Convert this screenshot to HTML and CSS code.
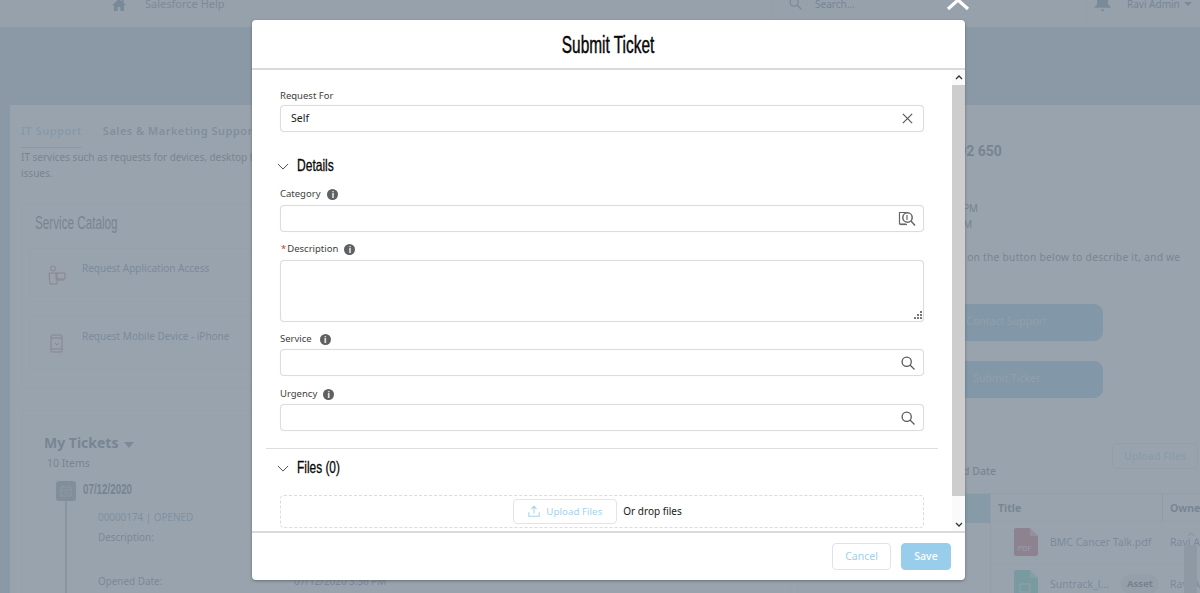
FILE: index.html
```html
<!DOCTYPE html>
<html lang="en">
<head>
<meta charset="utf-8">
<title>Submit Ticket</title>
<link rel="stylesheet" href="styles.css">
</head>
<body>
<div class="page">
  <header class="topbar">
    <div class="nav-left">
      <svg class="home-icon" viewBox="0 0 14 12"><path d="M7 0 0 6.200h2V12h3.600V8h2.800v4H12V6.200h2L11.600 4V1H10v1.600z"/></svg>
      <span class="nav-title">Salesforce Help</span>
    </div>
    <div class="nav-search">
      <svg class="search-icon" viewBox="0 0 14 14"><circle cx="5.500" cy="5.500" r="4.300"/><path d="m8.700 8.700 4.500 4.500"/></svg>
      <span>Search...</span>
    </div>
    <div class="nav-user">
      <svg class="bell-icon" viewBox="0 0 16 16"><path d="M8 0c3 0 4.600 2 4.600 5v3.500L15 11.500H1l2.400-3V5C3.400 2 5 0 8 0zM6.500 13h3a1.500 1.500 0 0 1-3 0z"/></svg>
      <span>Ravi Admin</span><i class="caret"></i>
    </div>
  </header>
  <div class="hero"></div>
  <main class="panel">
    <section class="col-left">
      <nav class="tabs">
        <span class="tab tab-active">IT Support</span>
        <span class="tab">Sales &amp; Marketing Support</span>
      </nav>
      <p class="tab-desc">IT services such as requests for devices, desktop hardware, software and other<br>issues.</p>
      <div class="card catalog">
        <h2 class="card-title"><span class="narrow n65">Service Catalog</span></h2>
        <div class="cat-item">
          <svg class="cat-icon" viewBox="0 0 20 20"><circle cx="6" cy="3.500" r="2.500"/><path d="M2 8h8v11H3zM9 8h9v6H9zM10 15h7"/></svg>
          <span class="cat-link">Request Application Access</span>
        </div>
        <div class="cat-item">
          <svg class="cat-icon" viewBox="0 0 20 20"><rect x="4" y="2" width="11" height="17" rx="1"/><path d="M4 5h11M4 16h11M8 10l2 2 1.500-2"/></svg>
          <span class="cat-link">Request Mobile Device - iPhone</span>
        </div>
      </div>
      <div class="card tickets">
        <div class="tickets-title">My Tickets <i class="caret caret-lg"></i></div>
        <div class="tickets-count">10 Items</div>
        <div class="day">
          <span class="day-icon"><svg viewBox="0 0 14 14"><path d="M2 3h10v9H2zM2 6h10M4 1v2M10 1v2M5 9h4"/></svg></span>
          <span class="day-date"><span class="narrow n70">07/12/2020</span></span>
        </div>
        <div class="entry">
          <a class="entry-link">00000174 | OPENED</a>
          <div class="entry-row">Description:</div>
          <div class="entry-row entry-opened"><span class="entry-key">Opened Date:</span><span>07/12/2020 3:36 PM</span></div>
        </div>
      </div>
    </section>
    <section class="col-right">
      <div class="phone">Customer Care: 1800 102 650</div>
      <div class="hours">Monday - Friday: 9:00 AM - 6:00 PM<br>Saturday-Sun: 10:00 AM - 1:00 PM</div>
      <p class="help-text">If you have an issue, please click on the button below to describe it, and we</p>
      <div class="cta">Contact Support</div>
      <div class="cta cta-second">Submit Ticket</div>
      <div class="files-head">
        <span class="sort-note">Sorted by Uploaded Date</span>
        <span class="upload-bg">Upload Files</span>
      </div>
      <div class="table">
        <div class="t-side"></div>
        <div class="t-main">
          <div class="t-row t-head"><span class="t-title">Title</span><span class="t-owner">Owner</span></div>
          <div class="t-row">
            <span class="t-title t-file"><svg class="file-icon" viewBox="0 0 24 28"><path class="fill-pdf" d="M2 0h14l8 8v18a2 2 0 0 1-2 2H2a2 2 0 0 1-2-2V2a2 2 0 0 1 2-2z"/><path class="fold" d="M16 0v8h8z"/><text class="pdf-label" x="3.500" y="23">PDF</text></svg><span class="file-name">BMC Cancer Talk.pdf</span></span>
            <span class="t-owner owner-cell">Ravi Admin</span>
          </div>
          <div class="t-row">
            <span class="t-title t-file"><svg class="file-icon" viewBox="0 0 24 28"><path class="fill-asset" d="M2 0h14l8 8v18a2 2 0 0 1-2 2H2a2 2 0 0 1-2-2V2a2 2 0 0 1 2-2z"/><path class="fold" d="M16 0v8h8z"/><rect class="asset-mark" x="6" y="14" width="10" height="8"/></svg><span class="file-name">Suntrack_l...</span><span class="pill">Asset</span></span>
            <span class="t-owner owner-cell">Ravi Admin</span>
          </div>
        </div>
        <div class="t-scroll"><svg viewBox="0 0 8 5"><path d="m1 4 3-3 3 3"/></svg><div class="t-thumb"></div></div>
      </div>
    </section>
  </main>
</div>

<div class="backdrop"></div>

<div class="modal" role="dialog">
  <svg class="modal-close" viewBox="0 0 24 24"><path d="M2 15 12 6 22 15"/></svg>
  <header class="modal-head"><h1><span class="narrow n67 center">Submit Ticket</span></h1></header>
  <div class="modal-body">
    <div class="form">
      <label class="lbl lbl-first">Request For</label>
      <div class="input"><span class="val">Self</span>
        <svg class="ico ico-x" viewBox="0 0 14 14"><path d="m2 2 10 10M12 2 2 12"/></svg>
      </div>

      <div class="sec sec-details"><svg class="chev" viewBox="0 0 14 8"><path d="m1 1 6 6 6-6"/></svg><span class="narrow n73">Details</span></div>

      <label class="lbl lbl-cat">Category <i class="info info-cat">i</i></label>
      <div class="input">
        <svg class="ico ico-lookup" viewBox="0 0 18 16"><path class="thin" d="M8 13H1.500V1.500h7.500"/><path class="thin" d="M2 13.500h7"/><circle cx="9.500" cy="6.500" r="4.700"/><path d="m13 10 4 4.500"/><path class="thin" d="M9 4v5"/></svg>
      </div>

      <label class="lbl lbl-desc"><b class="req">*</b>Description <i class="info info-desc">i</i></label>
      <div class="input textarea">
        <svg class="grip" viewBox="0 0 8 8"><path d="M6 0h2v2H6zM3 3h2v2H3zM6 3h2v2H6zM0 6h2v2H0zM3 6h2v2H3zM6 6h2v2H6z"/></svg>
      </div>

      <label class="lbl lbl-service">Service <i class="info info-wide">i</i></label>
      <div class="input">
        <svg class="ico" viewBox="0 0 14 14"><circle cx="5.700" cy="5.700" r="4.600"/><path d="m9 9 4.500 4.500"/></svg>
      </div>

      <label class="lbl lbl-urgency">Urgency <i class="info">i</i></label>
      <div class="input">
        <svg class="ico" viewBox="0 0 14 14"><circle cx="5.700" cy="5.700" r="4.600"/><path d="m9 9 4.500 4.500"/></svg>
      </div>

      <hr class="rule">

      <div class="sec sec-files"><svg class="chev" viewBox="0 0 14 8"><path d="m1 1 6 6 6-6"/></svg><span class="narrow n72">Files (0)</span></div>

      <div class="drop">
        <span class="upload">
          <svg class="upload-ico" viewBox="0 0 14 14"><path d="M1 8.500V13h12V8.500M7 10V2M4 4.500 7 1.500l3 3"/></svg>
          Upload Files
        </span>
        <span class="drop-text">Or drop files</span>
      </div>
    </div>
    <div class="scrollbar">
      <div class="sb-btn"><svg viewBox="0 0 8 5"><path d="m1 4 3-3 3 3"/></svg></div>
      <div class="sb-thumb"></div>
      <div class="sb-rest"><svg viewBox="0 0 8 5"><path d="m1 1 3 3 3-3"/></svg></div>
    </div>
  </div>
  <footer class="modal-foot">
    <button class="btn btn-cancel">Cancel</button>
    <button class="btn btn-save">Save</button>
  </footer>
</div>
</body>
</html>
```
FILE: styles.css
```css
* { box-sizing: border-box; }
html, body { margin: 0; padding: 0; height: 593px; overflow: hidden; }
body { font-family: "Noto Sans", "Open Sans", sans-serif; color: #3e3e3c; position: relative; }

/* condensed display face, approximated by squeezing Liberation Sans */
.narrow { display: inline-block; white-space: nowrap; transform-origin: left center; }
.narrow.center { transform-origin: center center; }
.n65 { transform: scaleX(.65); }
.n67 { transform: scaleX(.67); }
.n70 { transform: scaleX(.7); }
.n72 { transform: scaleX(.72); }
.n73 { transform: scaleX(.73); }

/* page behind the dialog */
.page { width: 1200px; height: 593px; background: #bccde0; overflow: hidden; }
.topbar { height: 27px; background: #f3f3f3; display: flex; color: #54698d; font-size: 10px; line-height: 8px; }
.nav-left { display: flex; gap: 19px; padding-left: 112px; width: 771px; }
.home-icon { width: 14px; height: 12px; fill: #6b7c93; margin-top: -1px; }
.nav-title { font-size: 11px; color: #6f8096; }
.nav-search { display: flex; gap: 13px; width: 315px; border-left: 1px solid #eaeaea; padding-left: 17px; }
.search-icon { width: 13px; height: 13px; fill: none; stroke: #6f8096; stroke-width: 1.400; margin-top: -3px; }
.nav-user { display: flex; flex: 1; gap: 15px; padding-left: 6px; border-left: 1px solid #eaeaea; }
.bell-icon { width: 19px; height: 19px; fill: #6f8096; margin-top: -6px; }
.caret { display: inline-block; width: 0; height: 0; border: 4px solid transparent; border-top: 4px solid #6f8096; border-bottom: 0; margin: 2px 0 0 -11px; }
.hero { height: 78px; }

.panel { margin-left: 10px; height: 488px; background: #fff; display: flex; overflow: hidden; }
.col-left { width: 788px; flex: none; padding-left: 11px; border-right: 1px solid #f0f0f0; }
.tabs { display: flex; gap: 21px; height: 43px; padding-top: 18px; font-size: 11px; line-height: 16px; letter-spacing: .48px; font-weight: 600; color: #8a94a0; }
.tab-active { color: #a8cfe9; border-bottom: 1px solid #a8cfe9; padding-bottom: 8px; height: 25px; }
.tab-desc { margin: 1px 0 0; font-size: 10px; line-height: 16px; color: #5a6470; height: 55px; }
.card { border: 1px solid #efefef; border-radius: 4px; width: 770px; }
.catalog { height: 184px; padding: 7px 7px; }
.card-title { margin: 0 0 14px 6px; font-family: "Liberation Sans", sans-serif; font-weight: 400; font-size: 18px; line-height: 22px; color: #5a6470; height: 22px; }
.cat-item { display: flex; height: 54px; border: 1px solid #efefef; border-radius: 4px; margin-bottom: 14px; padding: 11px 0 0 17px; }
.cat-icon { width: 20px; height: 20px; fill: none; stroke: #c0645a; stroke-width: 1; margin: 5px 15px 0 0; }
.cat-link { font-size: 10px; line-height: 16px; color: #6e7fa0; }
.tickets { margin-top: 22px; height: 300px; padding: 22px 0 0 22px; }
.tickets-title { font-size: 14px; font-weight: 700; line-height: 20px; color: #5c6a7b; }
.caret-lg { border-width: 5px; border-top-width: 6px; margin-left: 2px; }
.tickets-count { font-size: 10.500px; line-height: 16px; margin: 2px 0 0 3px; color: #5a6470; }
.day { display: flex; gap: 7px; margin: 10px 0 0 12px; }
.day-icon { width: 20px; height: 20px; background: #8d99a6; border-radius: 3px; display: block; }
.day-icon svg { display: block; width: 14px; height: 14px; margin: 3px; fill: none; stroke: #c8ced6; }
.day-date { font-family: "Liberation Sans", sans-serif; font-weight: 700; font-size: 14px; line-height: 17px; color: #5a6470; }
.entry { margin: 0 0 0 21px; padding: 8px 0 0 31px; border-left: 2px solid #b3b9c0; height: 120px; font-size: 9.900px; line-height: 16px; color: #6b7480; }
.entry-link { display: block; color: #7f9dc2; }
.entry-row { margin-top: 4px; }
.entry-opened { display: flex; margin-top: 28px; }
.entry-key { width: 196px; }

.col-right { flex: 1; position: relative; font-size: 10.500px; color: #5a6470; min-width: 0; }
.phone { margin: 36px 0 0 0; white-space: nowrap; font-family: "Roboto", sans-serif; font-weight: 700; font-size: 14px; line-height: 20px; padding-left: 15px; }
.hours { margin-top: 40px; font-family: "Roboto", sans-serif; font-size: 10px; line-height: 16px; white-space: nowrap; padding-left: 23px; }
.help-text { margin: 16px 0 0 0; white-space: nowrap; font-size: 10.200px; line-height: 16px; padding-left: 3px; letter-spacing: .27px; }
.cta { margin: 39px 0 0 30px; width: 275px; height: 37px; border-radius: 9px; background: #8fc0df; color: #dbe8f2; font-size: 10.500px; line-height: 35px; text-align: center; padding-left: 82px; }
.cta-second { margin-top: 20px; }
.files-head { position: relative; height: 95px; }
.sort-note { position: absolute; right: 204px; top: 66px; white-space: nowrap; font-weight: 500; }
.upload-bg { position: absolute; left: 314px; top: 45px; width: 86px; height: 26px; border: 1px solid #e3e7ea; border-radius: 4px; text-align: center; line-height: 24px; color: #c3dcec; font-size: 10.500px; font-weight: 600; }
.table { display: flex; height: 110px; border-top: 1px solid #e3e3e3; }
.t-side { width: 192px; height: 29px; flex: none; background: #a9cfe6; }
.t-main { width: 210px; flex: none; border-left: 1px solid #e3e3e3; overflow: hidden; }
.t-row { display: flex; height: 42px; border-bottom: 1px solid #f0f0f0; align-items: center; padding-bottom: 1px; }
.t-head { height: 28px; font-weight: 700; font-size: 10.500px; color: #626d7a; padding-bottom: 0; }
.t-title { width: 171px; flex: none; padding-left: 7px; }
.t-head .t-owner { border-left: 1px solid #cfcfcf; height: 28px; line-height: 28px; padding-left: 7px; }
.t-owner { white-space: nowrap; }
.owner-cell { padding-left: 8px; color: #6e7fa0; }
.t-file { display: flex; align-items: center; padding-left: 23px; }
.file-icon { width: 24px; height: 28px; flex: none; margin-right: 12px; }
.fill-pdf { fill: #c9606e; }
.fill-asset { fill: #5fd2bc; }
.fold { fill: #fff; fill-opacity: .45; }
.pdf-label { font-size: 7.500px; fill: #f3dfe2; font-family: "Noto Sans", sans-serif; }
.asset-mark { fill: none; stroke: #e3f6f2; }
.file-name { color: #6e7fa0; white-space: nowrap; font-size: 10.500px; }
.pill { margin-left: 12px; background: #e9e9e9; border-radius: 10px; padding: 0 6px; font-size: 9.500px; font-weight: 700; line-height: 20px; color: #555; }
.t-scroll { position: absolute; left: 386px; top: 427px; width: 13px; }
.t-scroll svg { display: block; width: 8px; height: 5px; margin: 0 auto 8px; fill: none; stroke: #bfc5cb; stroke-width: 1.200; }
.t-thumb { height: 60px; background: #cdcdcd; }

.backdrop { position: absolute; inset: 0; background: rgba(126, 140, 153, .8); }

/* dialog */
.modal { position: absolute; left: 252px; top: 20px; width: 713px; height: 560px; background: #fff; border-radius: 4px; box-shadow: 0 1px 3px rgba(60, 70, 80, .55); display: flex; flex-direction: column; }
.modal-close { position: absolute; left: 694px; top: -26px; width: 24px; height: 24px; fill: none; stroke: #fff; stroke-width: 3.200; }
.modal-head { height: 50px; flex: none; border-bottom: 2px solid #d8dadc; text-align: center; }
.modal-head h1 { margin: 0; font-family: "Liberation Sans", sans-serif; font-weight: 400; font-size: 23px; line-height: 50px; color: #080707; -webkit-text-stroke: .45px #080707; }
.modal-body { flex: 1; min-height: 0; display: flex; overflow: hidden; }
.form { flex: 1; min-width: 0; padding: 0 28px 0 28px; overflow: hidden; }
.lbl { display: flex; align-items: center; font-size: 9.500px; line-height: 12px; height: 12px; color: #3e3e3c; margin-bottom: 4px; }
.lbl-first { margin-top: 20px; margin-bottom: 3px; }
.lbl-cat { margin-bottom: 5px; }
.lbl-desc { margin-top: 11px; margin-bottom: 5px; padding-left: 1px; }
.lbl-service { margin-top: 11px; }
.lbl-urgency { margin-top: 12px; }
.req { color: #c23934; font-weight: 400; margin-right: 1px; }
.info { display: inline-block; width: 11px; height: 11px; border-radius: 50%; background: #5f6062; color: #fff; font-style: normal; font-weight: 700; font-size: 8px; line-height: 11px; text-align: center; margin-left: 6px; }
.info-cat { margin-left: 7px; }
.info-desc { margin-left: 6px; }
.info-wide { margin-left: 8px; }
.input { position: relative; height: 27px; border: 1px solid #dcdcdc; border-radius: 4px; background: #fff; display: flex; align-items: center; padding: 0 0 2px 10px; box-shadow: 0 0 1px #e3e3e3; }
.val { font-size: 10.500px; color: #181818; }
.ico { position: absolute; right: 8px; top: 6px; width: 14px; height: 14px; fill: none; stroke: #5a5a5a; stroke-width: 1.300; }
.ico-x { width: 13px; height: 13px; right: 9px; }
.ico-lookup { width: 18px; height: 16px; top: 5px; right: 7px; stroke: #666; stroke-width: 1.500; }
.ico-lookup .thin { stroke-width: 1.200; }
.textarea { height: 62px; }
.grip { position: absolute; right: 1px; bottom: 2px; width: 8px; height: 8px; fill: #777; }
.sec { display: flex; align-items: center; font-family: "Liberation Sans", sans-serif; font-size: 16.500px; color: #080707; -webkit-text-stroke: .3px #080707; line-height: 22px; margin-left: -3px; }
.sec-details { margin-top: 22px; margin-bottom: 12px; }
.sec-files { margin-top: 7px; margin-bottom: 17px; }
.chev { width: 12px; height: 7px; fill: none; stroke: #444; stroke-width: 1.100; margin-right: 8px; margin-top: 3px; }
.rule { border: 0; border-top: 1px solid #dedede; margin: 17px -14px 0 -14px; }
.drop { display: flex; align-items: center; justify-content: center; gap: 6px; height: 33px; border: 1px dashed #dcdcdc; border-radius: 4px; padding-right: 9px; }
.upload { display: flex; align-items: center; gap: 6px; width: 104px; height: 25px; border: 1px solid #e0e5e9; border-radius: 4px; padding: 0 0 1px 14px; font-size: 9.800px; color: #a6d2ec; }
.upload-ico { width: 12px; height: 12px; fill: none; stroke: #a6d2ec; stroke-width: 1.200; }
.drop-text { font-size: 10px; color: #181818; white-space: nowrap; margin-bottom: 2px; }
.scrollbar { width: 13px; flex: none; display: flex; flex-direction: column; }
.sb-btn { height: 15px; background: #fafafa; }
.sb-thumb { height: 411px; background: #cdcdcd; }
.sb-rest { flex: 1; background: #fafafa; display: flex; align-items: flex-end; padding-bottom: 4px; justify-content: center; }
.scrollbar svg { width: 8px; height: 5px; fill: none; stroke: #333; stroke-width: 1.300; display: block; margin: 5px auto 0; }
.sb-rest svg { margin: 0; }
.modal-foot { height: 49px; flex: none; border-top: 2px solid #d8dadc; display: flex; justify-content: flex-end; align-items: flex-start; gap: 10px; padding: 10px 14px 0 0; }
.btn { height: 27px; border-radius: 4px; font-family: inherit; font-size: 10.500px; padding: 0 0 2px; }
.btn-cancel { width: 59px; background: #fff; border: 1px solid #dfe3e6; color: #9fcfe9; }
.btn-save { width: 50px; background: #99cdec; border: 1px solid #99cdec; color: #fff; font-weight: 500; }
```
